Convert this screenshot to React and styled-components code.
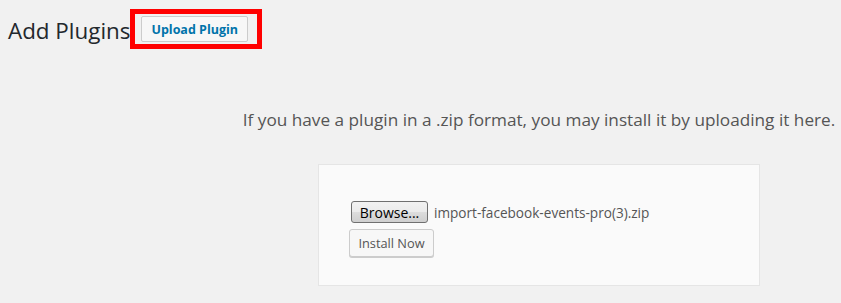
import React from "react"
import styled, { createGlobalStyle } from "styled-components"

const GlobalStyle = createGlobalStyle`
  html, body {
    margin: 0;
    padding: 0;
    background: #f1f1f1;
    overflow: hidden;
  }
  body {
    font-family: "Open Sans", "Noto Sans", sans-serif;
    color: #444;
  }
`

const Page = styled.div`
  width: 841px;
  height: 303px;
  background: #f1f1f1;
`

const Header = styled.div`
  display: flex;
  align-items: flex-start;
  padding: 9px 0 0 8px;
`

const Title = styled.h1`
  margin: 7px 0 0 0;
  font-size: 22.4px;
  font-weight: 400;
  line-height: 29px;
  color: #23282d;
`

const Highlight = styled.div`
  display: flex;
  border: 5px solid #ff0000;
  padding: 2px 9px 2px 6px;
`

const TitleAction = styled.button`
  font-family: inherit;
  height: 26px;
  padding: 0 9px;
  border: 1px solid #ccc;
  border-radius: 2px;
  background: #f7f7f7;
  color: #0073aa;
  font-size: 12.5px;
  font-weight: 700;
  cursor: pointer;
`

/* content column is centred on x=539, as in the wider admin page */
const Upload = styled.div`
  box-sizing: border-box;
  width: 841px;
  padding-left: 237px;
  display: flex;
  flex-direction: column;
  align-items: center;
`

const Help = styled.p`
  margin: 59px 0 0 0;
  font-size: 17.2px;
  line-height: 24px;
  white-space: nowrap;
  color: #555;
`

const Card = styled.form`
  box-sizing: border-box;
  width: 442px;
  height: 122px;
  margin-top: 32px;
  padding: 36px 30px 0 30px;
  background: #fafafa;
  border: 1px solid #e5e5e5;
  display: flex;
  flex-direction: column;
  align-items: flex-start;
  gap: 6px;
`

const FileRow = styled.div`
  display: flex;
  align-items: center;
  gap: 6px;
  padding-left: 2px;
`

const Browse = styled.span`
  box-sizing: border-box;
  display: inline-flex;
  align-items: center;
  justify-content: center;
  width: 77px;
  height: 22px;
  border: 1px solid #707070;
  border-radius: 3px;
  background: linear-gradient(#f2f2f2, #ebebeb 50%, #dddddd 50%, #cfcfcf);
  color: #000;
  font-size: 14px;
`

const FileName = styled.span`
  font-size: 13.6px;
  color: #555;
`

const Install = styled.button`
  font-family: inherit;
  box-sizing: border-box;
  width: 85px;
  height: 28px;
  padding: 0;
  border: 1px solid #ccc;
  border-radius: 3px;
  background: #f7f7f7;
  box-shadow: 0 1px 0 #ccc;
  color: #555;
  font-size: 12.8px;
  cursor: pointer;
`

export default function App() {
  return (
    <Page>
      <GlobalStyle />
      <Header>
        <Title>Add Plugins</Title>
        <Highlight>
          <TitleAction>Upload Plugin</TitleAction>
        </Highlight>
      </Header>
      <Upload>
        <Help>If you have a plugin in a .zip format, you may install it by uploading it here.</Help>
        <Card>
          <FileRow>
            <Browse>Browse...</Browse>
            <FileName>import-facebook-events-pro(3).zip</FileName>
          </FileRow>
          <Install type="button">Install Now</Install>
        </Card>
      </Upload>
    </Page>
  )
}
